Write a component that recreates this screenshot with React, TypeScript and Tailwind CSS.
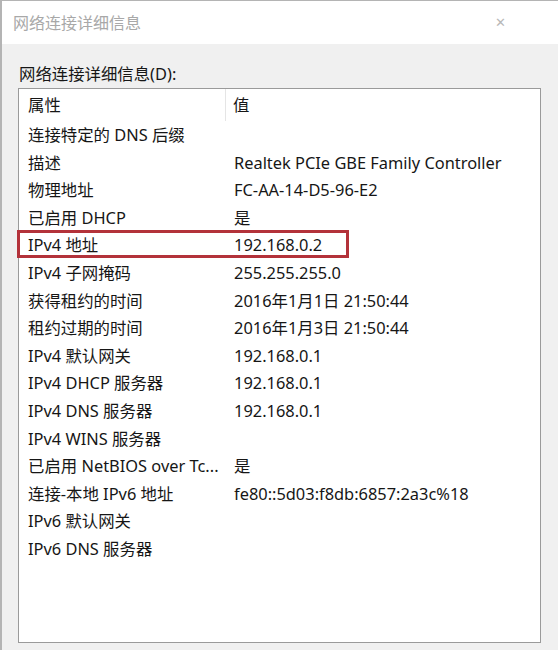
const rows: [string, string][] = [
  ["连接特定的 DNS 后缀", ""],
  ["描述", "Realtek PCIe GBE Family Controller"],
  ["物理地址", "FC-AA-14-D5-96-E2"],
  ["已启用 DHCP", "是"],
  ["IPv4 地址", "192.168.0.2"],
  ["IPv4 子网掩码", "255.255.255.0"],
  ["获得租约的时间", "2016年1月1日 21:50:44"],
  ["租约过期的时间", "2016年1月3日 21:50:44"],
  ["IPv4 默认网关", "192.168.0.1"],
  ["IPv4 DHCP 服务器", "192.168.0.1"],
  ["IPv4 DNS 服务器", "192.168.0.1"],
  ["IPv4 WINS 服务器", ""],
  ["已启用 NetBIOS over Tc...", "是"],
  ["连接-本地 IPv6 地址", "fe80::5d03:f8db:6857:2a3c%18"],
  ["IPv6 默认网关", ""],
  ["IPv6 DNS 服务器", ""],
];

export default function App() {
  return (
    <div
      className="flex h-[650px] w-[558px] flex-col overflow-hidden border-l-2 border-t border-[#b4b4b4] bg-[#f0f0f0] text-[#161616]"
      style={{ fontFamily: '"Noto Sans", "Noto Sans CJK SC", sans-serif' }}
    >
      {/* Title bar */}
      <div className="flex h-[43px] shrink-0 items-center justify-between bg-white pl-[11px] pr-[52px]">
        <span className="text-[16px] text-[#a8a8a8]">网络连接详细信息</span>
        <span className="text-[13px] leading-none text-[#b8b8b8]">✕</span>
      </div>

      {/* Content */}
      <div className="flex flex-col px-[16px] pt-[18px]">
        <div className="mb-[2px] h-[24px] pl-[1px] text-[16.4px] leading-[24px]">网络连接详细信息(D):</div>

        <div className="flex h-[555px] w-[523px] flex-col border border-[#9a9a9a] bg-white">
          {/* Header */}
          <div className="flex h-[32px] shrink-0 items-center text-[16.4px]">
            <div className="flex h-full w-[207px] items-center border-r border-[#e5e5e5] pl-[9px]">属性</div>
            <div className="pl-[7px]">值</div>
          </div>

          {rows.map(([k, v], i) => (
            <div key={i} className="relative flex h-[27.6px] shrink-0 items-center text-[16.4px] leading-none">
              <div className="w-[208px] whitespace-nowrap pl-[9px] pt-[1px]">{k}</div>
              <div className="whitespace-nowrap pl-[7px] pt-[1px]">{v}</div>
              {i === 4 && (
                <span className="pointer-events-none absolute left-[-2px] top-[-1px] h-[28px] w-[332px] border-[3px] border-[#b3323a]" />
              )}
            </div>
          ))}
        </div>
      </div>
    </div>
  );
}
